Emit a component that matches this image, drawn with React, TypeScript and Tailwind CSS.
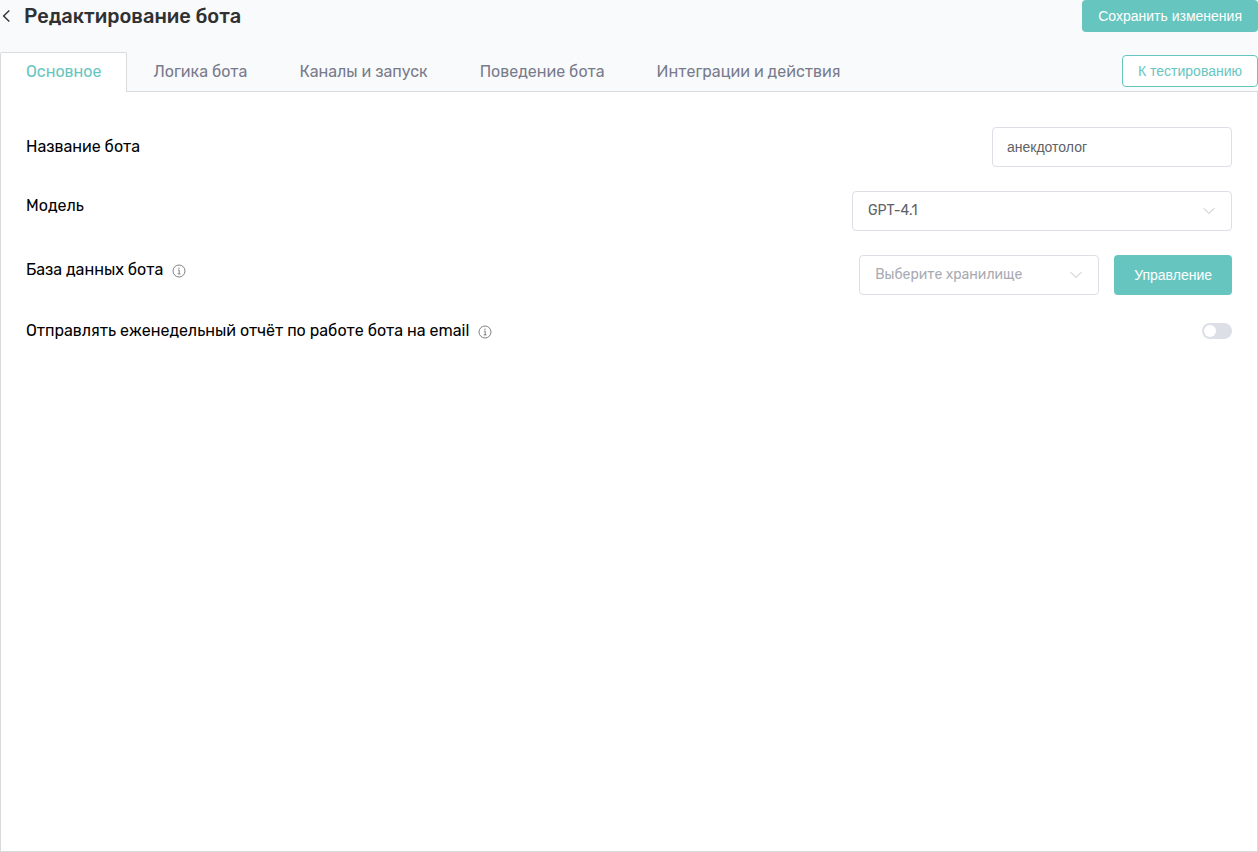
import { useState } from "react";

const tabs = ["Основное", "Логика бота", "Каналы и запуск", "Поведение бота", "Интеграции и действия"];

function InfoIcon() {
  return (
    <svg className="mt-0.5 size-3.5 text-[#606266]" viewBox="0 0 14 14" fill="none" stroke="currentColor" aria-hidden="true">
      <circle cx="7" cy="7" r="6" strokeWidth="0.8" />
      <path d="M6 6.1h1.2v3.8M5.7 9.9h2.8" strokeWidth="0.8" />
      <circle cx="7" cy="4.2" r="0.6" fill="currentColor" stroke="none" />
    </svg>
  );
}

function SelectArrow() {
  return (
    <svg
      className="pointer-events-none absolute top-1/2 right-4 size-3.5 -translate-y-1/2 text-[#b4b7be]"
      viewBox="0 0 14 14"
      fill="none"
      stroke="currentColor"
      strokeLinecap="round"
      aria-hidden="true"
    >
      <path d="M2 4.5 7 9.5l5-5" strokeWidth="0.9" />
    </svg>
  );
}

export default function App() {
  const [activeTab, setActiveTab] = useState(tabs[0]);
  const [name, setName] = useState("анекдотолог");
  const [weeklyReport, setWeeklyReport] = useState(false);

  return (
    <div className="flex min-h-screen flex-col bg-[#f9fafc] font-[Rubik,Roboto,sans-serif] text-black">
      <header className="flex h-8 items-center justify-between">
        <div className="flex items-center gap-3">
          <button type="button" aria-label="Назад" className="text-[#303133]">
            <svg className="h-4 w-3" viewBox="0 0 12 16" fill="none" stroke="currentColor" strokeWidth="1.4">
              <path d="M9.3 2.5 3.6 8l5.7 5.5" />
            </svg>
          </button>
          <h1 className="text-xl font-medium text-[#303133]">Редактирование бота</h1>
        </div>
        <button type="button" className="h-8 rounded bg-[#67c5bf] px-4 font-['Liberation_Sans',Arial,sans-serif] text-sm text-white">
          Сохранить изменения
        </button>
      </header>

      <div className="mt-5 flex h-10 items-stretch justify-between border-b border-[#d9dbdf]">
        <div role="tablist" className="flex">
          {tabs.map((tab) => (
            <button
              key={tab}
              type="button"
              role="tab"
              aria-selected={tab === activeTab}
              onClick={() => setActiveTab(tab)}
              className={
                tab === activeTab
                  ? "-mb-px rounded-t-xs border border-b-0 border-[#d9dbdf] bg-white px-[25px] pb-0.5 text-base text-[#67c5bf]"
                  : "px-[26px] text-base text-[#787b8b]"
              }
            >
              {tab}
            </button>
          ))}
        </div>
        <button
          type="button"
          className="mt-[3px] h-8 rounded border border-[#67c5bf] bg-white px-[15px] font-['Liberation_Sans',Arial,sans-serif] text-sm text-[#67c5bf]"
        >
          К тестированию
        </button>
      </div>

      <main className="flex flex-1 flex-col gap-6 border border-t-0 border-[#d9dbdf] bg-white px-[25px] pt-[35px]">
        <div className="flex h-10 items-center justify-between">
          <label htmlFor="name">Название бота</label>
          <input
            id="name"
            value={name}
            onChange={(event) => setName(event.currentTarget.value)}
            className="h-10 w-60 rounded border border-[#dcdfe6] px-[14px] font-['Liberation_Sans',Arial,sans-serif] text-sm text-[#606266]"
          />
        </div>
        <div className="flex h-10 items-start justify-between">
          <label htmlFor="model" className="leading-[30px]">
            Модель
          </label>
          <div className="relative w-95">
            <select
              id="model"
              className="h-10 w-full appearance-none rounded border border-[#dcdfe6] bg-white px-[15px] text-sm text-[#606266]"
            >
              <option>GPT-4.1</option>
            </select>
            <SelectArrow />
          </div>
        </div>
        <div className="flex h-10 items-start justify-between">
          <div className="flex items-center gap-[9px]">
            <label htmlFor="storage" className="leading-[30px]">
              База данных бота
            </label>
            <InfoIcon />
          </div>
          <div className="flex gap-[15px]">
            <div className="relative w-60">
              <select
                id="storage"
                className="h-10 w-full appearance-none rounded border border-[#dcdfe6] bg-white px-[15px] text-sm text-[#a8abb2]"
              >
                <option>Выберите хранилище</option>
              </select>
              <SelectArrow />
            </div>
            <button type="button" className="rounded bg-[#67c5bf] px-5 font-['Liberation_Sans',Arial,sans-serif] text-sm text-white">
              Управление
            </button>
          </div>
        </div>
        <div className="flex items-center justify-between">
          <div className="flex items-center gap-[9px]">
            <label htmlFor="report">Отправлять еженедельный отчёт по работе бота на email</label>
            <InfoIcon />
          </div>
          <input
            id="report"
            type="checkbox"
            role="switch"
            checked={weeklyReport}
            onChange={(event) => setWeeklyReport(event.currentTarget.checked)}
            className="flex h-4 w-[30px] cursor-pointer appearance-none items-center rounded-full bg-[#dcdfe6] px-0.5 before:size-3 before:rounded-full before:bg-white checked:justify-end checked:bg-[#67c5bf]"
          />
        </div>
      </main>
    </div>
  );
}
